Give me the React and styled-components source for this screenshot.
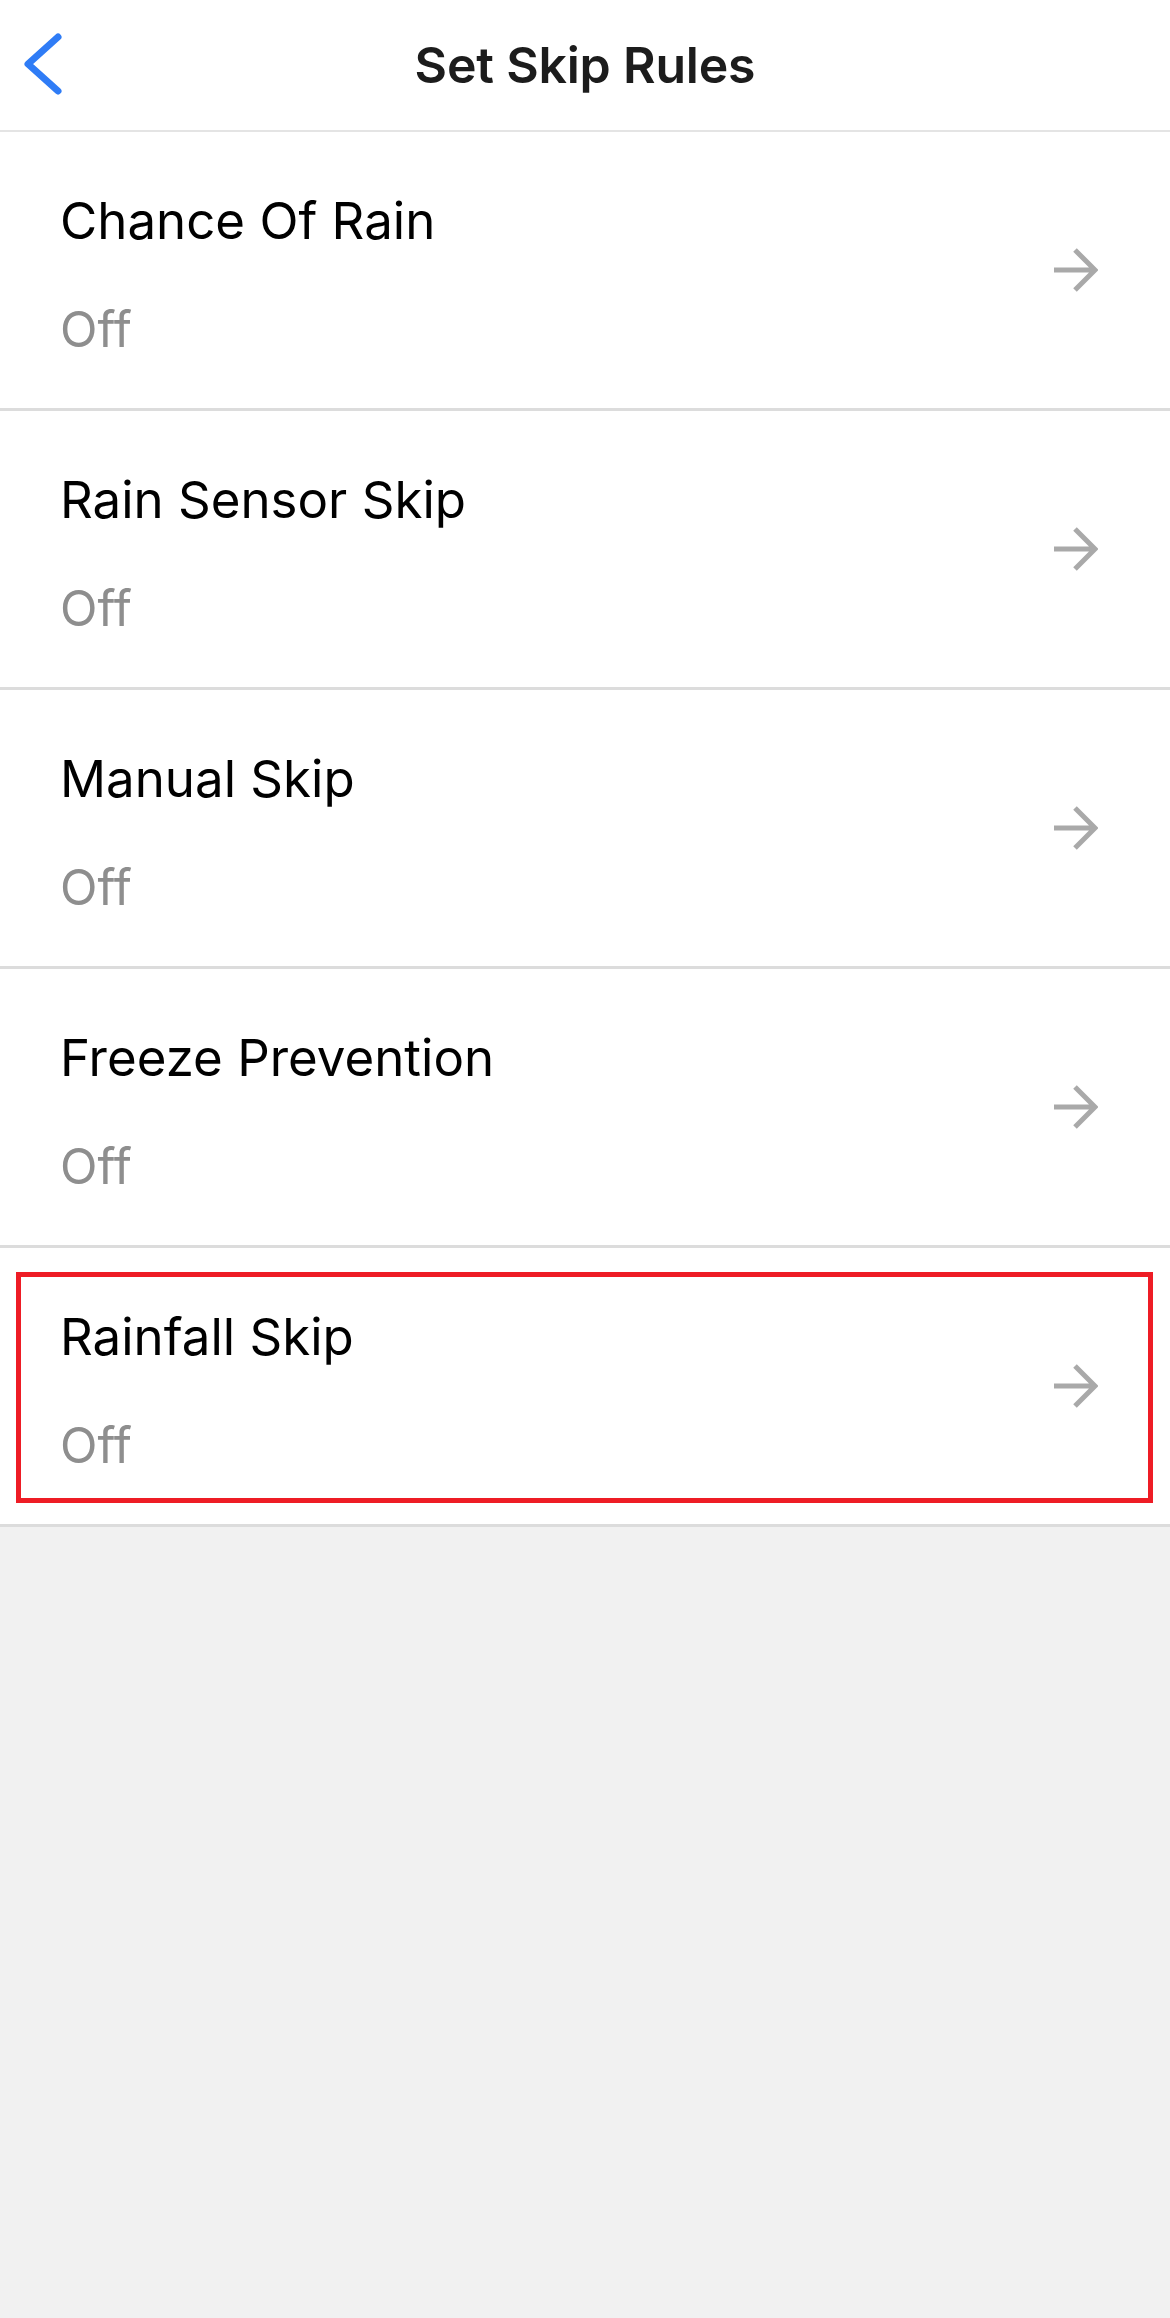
import styled, { createGlobalStyle } from 'styled-components';

const GlobalStyle = createGlobalStyle`
    html, body {
        margin: 0;
        padding: 0;
        background-color: #f1f1f1;
    }
    body {
        font-family: Inter, "Noto Sans", "Liberation Sans", sans-serif;
    }
`;

const Page = styled.div`
    min-height: 2318px;
    background-color: #f1f1f1;
`;

const Header = styled.header`
    display: grid;
    grid-template-columns: 1fr auto 1fr;
    align-items: center;
    height: 130px;
    background-color: #ffffff;
    border-bottom: 2px solid #e4e4e4;
`;

const BackButton = styled.button`
    justify-self: start;
    display: flex;
    align-items: center;
    padding: 0 0 0 22px;
    border: none;
    background: none;
    cursor: pointer;
`;

const Title = styled.h1`
    margin: 0;
    font-size: 50px;
    font-weight: 600;
    color: #1c1c1c;
    letter-spacing: -0.2px;
`;

const List = styled.div`
    display: flex;
    flex-direction: column;
    background-color: #ffffff;
`;

const Row = styled.div`
    position: relative;
    display: flex;
    align-items: center;
    justify-content: space-between;
    padding: 0 72px 0 60px;
    border-bottom: 3px solid #dcdcdc;
    cursor: pointer;
`;

const TextBlock = styled.div`
    display: flex;
    flex-direction: column;
    padding: 60px 0 49px;
`;

const Label = styled.div`
    font-size: 51px;
    line-height: 58px;
    color: #000000;
`;

const Value = styled.div`
    margin-top: 51px;
    font-size: 49px;
    line-height: 58px;
    color: #8e8e8e;
`;

const Highlight = styled.div`
    position: absolute;
    top: 24px;
    left: 16px;
    right: 17px;
    bottom: 21px;
    border: 5px solid #ee1c25;
    pointer-events: none;
`;

const rules = [
    { name: 'Chance Of Rain', value: 'Off' },
    { name: 'Rain Sensor Skip', value: 'Off' },
    { name: 'Manual Skip', value: 'Off' },
    { name: 'Freeze Prevention', value: 'Off' },
    { name: 'Rainfall Skip', value: 'Off', marked: true },
];

function BackIcon() {
    return (
        <svg width="44" height="66" viewBox="0 0 44 66">
            <path d="M36 5 L6 32 L36 59" fill="none" stroke="#2f7cf6" strokeWidth="7" strokeLinecap="round" strokeLinejoin="round" />
        </svg>
    );
}

function ArrowIcon() {
    return (
        <svg width="44" height="44" viewBox="0 0 44 44">
            <path d="M0 22 H41 M21 2 L41 22 L21 42" fill="none" stroke="#a9a9a9" strokeWidth="5" />
        </svg>
    );
}

export default function App() {
    return (
        <Page>
            <GlobalStyle />
            <Header>
                <BackButton aria-label="Back">
                    <BackIcon />
                </BackButton>
                <Title>Set Skip Rules</Title>
                <div />
            </Header>
            <List>
                {rules.map((rule) => (
                    <Row key={rule.name}>
                        <TextBlock>
                            <Label>{rule.name}</Label>
                            <Value>{rule.value}</Value>
                        </TextBlock>
                        <ArrowIcon />
                        {rule.marked && <Highlight />}
                    </Row>
                ))}
            </List>
        </Page>
    );
}
